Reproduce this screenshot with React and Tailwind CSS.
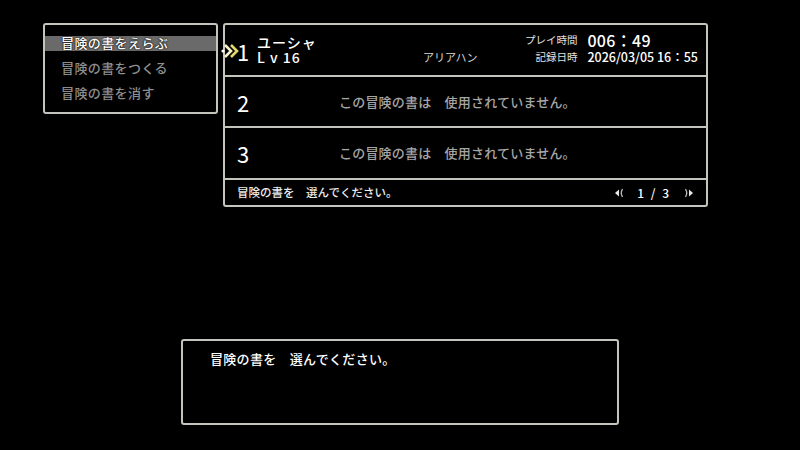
import React from 'react';

const font = { fontFamily: '"Noto Sans CJK JP", "Noto Sans", sans-serif' };

const menuItems = ['冒険の書をえらぶ', '冒険の書をつくる', '冒険の書を消す'];

const Cursor = () => (
    <svg width="20" height="16" viewBox="0 0 20 16" className="absolute left-[-4px] top-[18px]">
        <circle cx="2" cy="8" r="1.6" fill="#ffffff" />
        <path d="M4 2 L10 8 L4 14" fill="none" stroke="#f4f0c8" strokeWidth="2.6" />
        <path d="M10 2 L16 8 L10 14" fill="none" stroke="#e6d86a" strokeWidth="2.6" />
    </svg>
);

const PageArrow = ({ right }) => (
    <svg width="8" height="10" viewBox="0 0 8 10" className={right ? 'rotate-180' : ''}>
        <path d="M0 5 L4 1.5 L4 8.5 Z" fill="#e8e8e8" />
        <path d="M7.5 1 Q5 5 7.5 9" fill="none" stroke="#bdbdbd" strokeWidth="1.3" />
    </svg>
);

const EmptyRow = ({ num, last }) => (
    <div className={`flex items-center pl-[12px] ${last ? 'h-[52px]' : 'h-[51px]'} border-b-2 border-[#c4c4bc]`}>
        <span className="w-[102px] text-[22px] leading-none text-white">{num}</span>
        <span className="text-[13px] font-medium text-[#a6a6a6] tracking-[0.2px]">この冒険の書は　使用されていません。</span>
    </div>
);

export default function App() {
    return (
        <div className="w-[800px] h-[450px] bg-black overflow-hidden" style={font}>
            <div className="flex pt-[23px] pl-[43px] gap-[5px]">
                {/* command menu */}
                <div className="w-[175px] h-[91px] border-2 border-[#c4c4bc] rounded-[3px] pt-[11px]">
                    {menuItems.map((label, i) => (
                        <div
                            key={label}
                            className={`h-[15px] mb-[10px] flex items-center pl-[16px] text-[13px] font-medium leading-none tracking-[0.4px] ${i === 0 ? 'bg-[#6a6a6a] text-white' : 'text-[#8e8e8e]'}`}
                            style={i === 0 ? { textShadow: '0 0 2px #000, 0 0 1px #000' } : undefined}
                        >
                            <span className="-mt-[2px]">{label}</span>
                        </div>
                    ))}
                </div>

                {/* adventure log list */}
                <div className="relative w-[485px] h-[184px] border-2 border-[#c4c4bc] rounded-[3px] flex flex-col">
                    <Cursor />
                    <div className="flex h-[52px] border-b-2 border-[#c4c4bc] pl-[12px] pr-[8px]">
                        <span className="w-[20px] pt-[15px] text-[22px] leading-none text-white">1</span>
                        <div className="w-[166px] flex flex-col pt-[10px] gap-[1px] text-white font-medium">
                            <span className="text-[14px] leading-[14px] tracking-[1px]">ユーシャ</span>
                            <span className="text-[14px] leading-[14px] tracking-[1px]">L v 16</span>
                        </div>
                        <span className="pt-[24px] text-[11px] text-[#d8d8d8]">アリアハン</span>
                        <div className="ml-auto grid grid-cols-[auto_auto] gap-x-[10px] gap-y-[1px] items-center content-start pt-[7px]">
                            <span className="text-[10.5px] leading-[16px] text-[#e0e0e0] text-right">プレイ時間</span>
                            <span className="text-[16px] leading-[16px] text-white tracking-[0.3px] font-medium">006：49</span>
                            <span className="text-[10.5px] leading-[15px] text-[#e0e0e0] text-right">記録日時</span>
                            <span className="text-[12.5px] leading-[15px] text-white font-medium">2026/03/05 16：55</span>
                        </div>
                    </div>
                    <EmptyRow num="2" />
                    <EmptyRow num="3" last />
                    <div className="flex-1 flex items-center pl-[12px] pr-[13px] text-[11.5px] font-medium text-[#ececec]">
                        <span>冒険の書を　選んでください。</span>
                        <div className="ml-auto flex items-center gap-[14px] text-[12px] text-white">
                            <PageArrow />
                            <span className="tracking-[2px]">1 / 3</span>
                            <PageArrow right />
                        </div>
                    </div>
                </div>
            </div>

            {/* message window */}
            <div className="ml-[181px] mt-[132px] w-[438px] h-[86px] border-2 border-[#c4c4bc] rounded-[3px] pl-[27px] pt-[4px]">
                <span className="text-[13px] font-medium text-white tracking-[0.3px]">冒険の書を　選んでください。</span>
            </div>
        </div>
    );
}
